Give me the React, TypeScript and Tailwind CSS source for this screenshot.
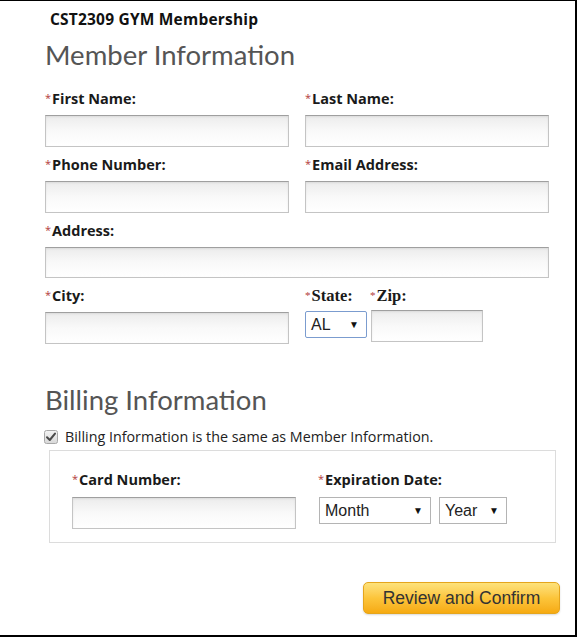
import React from "react";

const sans = { fontFamily: '"Open Sans", "Noto Sans", sans-serif' };

function Star() {
  return <span className="text-[#b23a3a] text-[11px] font-normal relative -top-[2px] mr-[1px]">*</span>;
}

function Label({ text, serif }: { text: string; serif?: boolean }) {
  return (
    <div
      className={
        "h-5 leading-5 font-bold text-[#1a1a1a] whitespace-nowrap " +
        (serif ? "font-['Liberation_Serif',serif] text-[16.5px]" : "font-['Open_Sans',sans-serif] text-[14.5px]")
      }
    >
      <Star />
      {text}
    </div>
  );
}

function TextBox({ w, h = "h-8" }: { w: string; h?: string }) {
  return (
    <input
      type="text"
      className={
        w +
        " " +
        h +
        " block border border-[#c4c4c4] border-t-[#9f9f9f] bg-gradient-to-b from-[#ececec] via-[#f9f9f9] to-white shadow-[inset_0_1px_2px_rgba(0,0,0,0.08)] outline-none"
      }
    />
  );
}

function FakeSelect({ w, text, blue }: { w: string; text: string; blue?: boolean }) {
  return (
    <div
      className={
        w +
        " h-[27px] flex items-center justify-between pl-[5px] pr-[7px] bg-white text-[16px] text-[#222] font-['Liberation_Sans',Arial,sans-serif] border " +
        (blue ? "border-[#7b9ccf] rounded-[2px]" : "border-[#b4b4b4]")
      }
    >
      <span>{text}</span>
      <span className="text-[10px] text-[#111]">▼</span>
    </div>
  );
}

export default function App() {
  return (
    <div className="w-[577px] h-[637px] bg-white border-t border-r-2 border-b-2 border-black" style={sans}>
      <div className="pt-[8px] pl-[50px] h-[29px] leading-5 text-[15.5px] tracking-[0.2px] font-bold text-[#111] font-['Open_Sans',sans-serif]">
        CST2309 GYM Membership
      </div>
      <div className="pl-[45px]">
        <div className="mt-[7px] h-9 leading-9 text-[27.5px] text-[#555] font-['Lato',sans-serif]">
          Member Information
        </div>
        <div className="mt-[16px] grid grid-cols-[244px_244px] gap-x-4 gap-y-[8px] w-[504px]">
          <div>
            <Label text="First Name:" />
            <div className="mt-[6px]"><TextBox w="w-[244px]" /></div>
          </div>
          <div>
            <Label text="Last Name:" />
            <div className="mt-[6px]"><TextBox w="w-[244px]" /></div>
          </div>
          <div>
            <Label text="Phone Number:" />
            <div className="mt-[6px]"><TextBox w="w-[244px]" /></div>
          </div>
          <div>
            <Label text="Email Address:" />
            <div className="mt-[6px]"><TextBox w="w-[244px]" /></div>
          </div>
          <div className="col-span-2">
            <Label text="Address:" />
            <div className="mt-[6px]"><TextBox w="w-[504px]" h="h-[31px]" /></div>
          </div>
          <div>
            <Label text="City:" />
            <div className="mt-[6px]"><TextBox w="w-[244px]" /></div>
          </div>
          <div className="flex gap-[1px]">
            <div className="w-[64px]">
              <Label text="State:" serif />
              <div className="mt-[5px]"><FakeSelect w="w-[62px]" text="AL" blue /></div>
            </div>
            <div>
              <Label text="Zip:" serif />
              <div className="mt-[4px] ml-[1px]"><TextBox w="w-[112px]" /></div>
            </div>
          </div>
        </div>
        <div className="mt-[38px] h-9 leading-9 text-[27.5px] text-[#555] font-['Lato',sans-serif]">
          Billing Information
        </div>
        <div className="mt-[11px] flex items-center h-4 -ml-[1px]">
          <svg width="14" height="14" viewBox="0 0 14 14" className="shrink-0">
            <defs>
              <linearGradient id="cb" x1="0" y1="0" x2="0" y2="1">
                <stop offset="0" stopColor="#f4f4f4" />
                <stop offset="1" stopColor="#d8d8d8" />
              </linearGradient>
            </defs>
            <rect x="0.5" y="0.5" width="13" height="13" rx="2" fill="url(#cb)" stroke="#a8a8a8" />
            <path d="M3 7.2 L5.8 10 L11 3.6" fill="none" stroke="#4a4a4a" strokeWidth="2" strokeLinecap="round" strokeLinejoin="round" />
          </svg>
          <span className="ml-[7px] text-[14.3px] text-[#222] whitespace-nowrap leading-4 font-['Open_Sans',sans-serif]">
            Billing Information is the same as Member Information.
          </span>
        </div>
      </div>
      <div className="ml-[49px] mt-[5px] w-[507px] border border-[#dcdcdc] pt-[19px] pb-[13px] pl-[22px]">
        <div className="grid grid-cols-[224px_auto] gap-x-[22px]">
          <div>
            <Label text="Card Number:" />
            <div className="mt-[7px]"><TextBox w="w-[224px]" /></div>
          </div>
          <div>
            <Label text="Expiration Date:" />
            <div className="mt-[7px] ml-[1px] flex gap-[8px]">
              <FakeSelect w="w-[112px]" text="Month" />
              <FakeSelect w="w-[68px]" text="Year" />
            </div>
          </div>
        </div>
      </div>
      <div className="mt-[39px] flex justify-end pr-[15px]">
        <button className="w-[197px] h-8 rounded-[5px] border border-[#e5a51c] bg-gradient-to-b from-[#fde27a] via-[#fcc53a] to-[#f6aa0f] text-[17.5px] text-[#333] font-['Liberation_Sans',Arial,sans-serif] shadow-[0_1px_2px_rgba(0,0,0,0.15)]">
          Review and Confirm
        </button>
      </div>
    </div>
  );
}
